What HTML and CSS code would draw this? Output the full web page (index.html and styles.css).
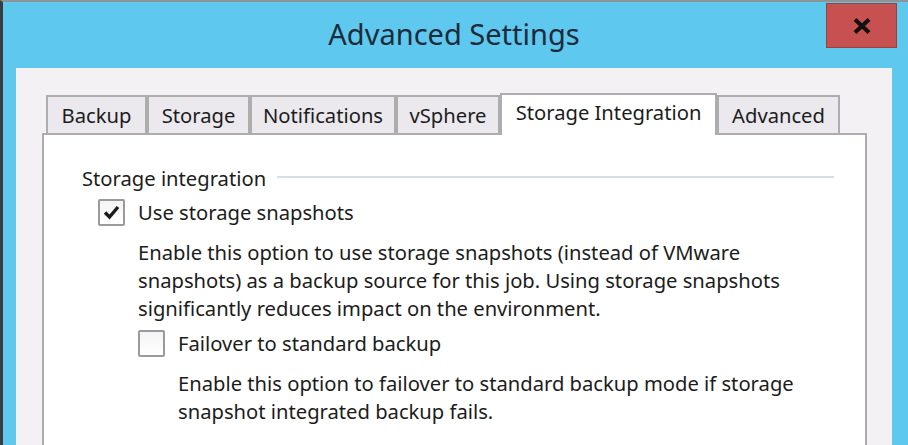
FILE: index.html
```html
<!DOCTYPE html>
<html lang="en">
<head>
<meta charset="utf-8">
<title>Advanced Settings</title>
<link rel="stylesheet" href="styles.css">
</head>
<body>
<div class="window">
  <div class="titlebar">
    <div class="spacer"></div>
    <div class="title">Advanced Settings</div>
    <div class="controls">
      <div class="close" aria-label="Close">
        <svg width="22" height="18" viewBox="0 0 22 18"><path d="M4 2.5 L18 15.5 M18 2.5 L4 15.5" stroke="#111" stroke-width="4"/></svg>
      </div>
    </div>
  </div>
  <div class="client">
    <div class="tabs">
      <div class="tab w-backup">Backup</div>
      <div class="tab w-storage">Storage</div>
      <div class="tab w-notif">Notifications</div>
      <div class="tab w-vsphere">vSphere</div>
      <div class="tab tab-active w-si">Storage Integration</div>
      <div class="tab w-adv">Advanced</div>
    </div>
    <div class="panel">
      <div class="group-head">
        <span class="group-label">Storage integration</span>
        <span class="group-line"></span>
      </div>
      <div class="option">
        <div class="opt-row">
          <span class="checkbox">
            <svg width="23" height="23" viewBox="0 0 23 23"><path d="M5 11.5 L9.5 16 L18 6" fill="none" stroke="#1b1b1b" stroke-width="3.4"/></svg>
          </span>
          <span class="opt-label">Use storage snapshots</span>
        </div>
        <div class="opt-body">
          <p class="desc">Enable this option to use storage snapshots (instead of VMware<br>snapshots) as a backup source for this job. Using storage snapshots<br>significantly reduces impact on the environment.</p>
          <div class="option option-sub">
            <div class="opt-row">
              <span class="checkbox"></span>
              <span class="opt-label">Failover to standard backup</span>
            </div>
            <div class="opt-body">
              <p class="desc">Enable this option to failover to standard backup mode if storage<br>snapshot integrated backup fails.</p>
            </div>
          </div>
        </div>
      </div>
    </div>
  </div>
</div>
</body>
</html>
```

FILE: styles.css
```css
* { box-sizing: border-box; }
html, body {
  margin: 0;
  padding: 0;
  background: #5ec8ee;
}
body {
  width: 908px;
  height: 445px;
  overflow: hidden;
  font-family: "Noto Sans", "Open Sans", sans-serif;
  font-size: 20.2px;
  color: #1c1c1c;
}
.window {
  width: 908px;
  height: 445px;
  background: #5ec8ee;
  border-top: 2px solid #8c959a;
  border-left: 3px solid #383d41;
  display: flex;
  flex-direction: column;
}
.titlebar {
  height: 66px;
  flex: none;
  display: grid;
  grid-template-columns: 1fr auto 1fr;
}
.title {
  font-size: 29px;
  color: #1d2b3b;
  line-height: 66px;
  padding-right: 3px;
  margin-top: -1px;
}
.controls {
  display: flex;
  justify-content: flex-end;
  align-items: flex-start;
  padding-right: 11px;
  padding-top: 1px;
}
.close {
  width: 71px;
  height: 45px;
  background: #c75050;
  border: 1px solid #99413f;
  display: flex;
  align-items: center;
  justify-content: center;
}
.client {
  flex: 1;
  margin: 0 16px 0 13px;
  background: #f4f1f5;
  padding: 25px 25px 0 26px;
  display: flex;
  flex-direction: column;
}
.tabs {
  display: flex;
  align-items: flex-end;
  padding-left: 4px;
  height: 42px;
  flex: none;
  margin-bottom: -2px;
  position: relative;
  z-index: 1;
}
.tab {
  height: 38px;
  margin-bottom: 2px;
  background: #ebe8ee;
  border: 2px solid #adadad;
  border-bottom: none;
  text-align: center;
  line-height: 36px;
  white-space: nowrap;
}
.tab-active {
  height: 42px;
  margin-bottom: 0;
  background: #ffffff;
  padding-bottom: 6px;
  line-height: 34px;
}
.w-backup { width: 101px; }
.w-storage { width: 103px; }
.w-notif { width: 146px; }
.w-vsphere { width: 104px; }
.w-si { width: 217px; }
.w-adv { width: 123px; }
.panel {
  flex: 1;
  background: #ffffff;
  border: 2px solid #adadad;
  border-bottom: none;
  padding: 29px 31px 0 38px;
}
.group-head {
  display: flex;
  align-items: center;
  height: 28px;
  gap: 11px;
}
.group-label {
  line-height: 28px;
}
.group-line {
  flex: 1;
  height: 2px;
  background: #d6dee8;
  margin-top: -3px;
}
.option {
  margin-top: 6px;
  margin-left: 16px;
}
.option-sub {
  margin-top: 7px;
  margin-left: 0;
}
.opt-row {
  display: flex;
  align-items: center;
  height: 28px;
  gap: 13px;
}
.checkbox {
  width: 27px;
  height: 27px;
  border: 2px solid #9a9a9a;
  border-radius: 2px;
  background: linear-gradient(#f4f4f4, #ffffff);
  display: flex;
  align-items: center;
  justify-content: center;
  flex: none;
}
.opt-label {
  line-height: 28px;
}
.opt-body {
  padding-left: 40px;
}
.desc {
  margin: 12px 0 0 0;
  line-height: 28px;
}
```
